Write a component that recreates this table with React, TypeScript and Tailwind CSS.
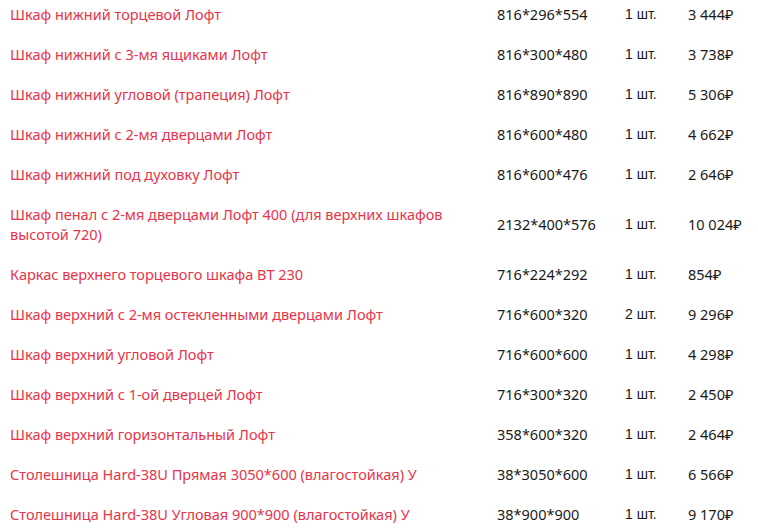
const items = [
  { name: "Шкаф нижний торцевой Лофт", size: "816*296*554", qty: "1 шт.", price: "3 444₽" },
  { name: "Шкаф нижний с 3-мя ящиками Лофт", size: "816*300*480", qty: "1 шт.", price: "3 738₽" },
  { name: "Шкаф нижний угловой (трапеция) Лофт", size: "816*890*890", qty: "1 шт.", price: "5 306₽" },
  { name: "Шкаф нижний с 2-мя дверцами Лофт", size: "816*600*480", qty: "1 шт.", price: "4 662₽" },
  { name: "Шкаф нижний под духовку Лофт", size: "816*600*476", qty: "1 шт.", price: "2 646₽" },
  { name: "Шкаф пенал с 2-мя дверцами Лофт 400 (для верхних шкафов высотой 720)", size: "2132*400*576", qty: "1 шт.", price: "10 024₽" },
  { name: "Каркас верхнего торцевого шкафа ВТ 230", size: "716*224*292", qty: "1 шт.", price: "854₽" },
  { name: "Шкаф верхний с 2-мя остекленными дверцами Лофт", size: "716*600*320", qty: "2 шт.", price: "9 296₽" },
  { name: "Шкаф верхний угловой Лофт", size: "716*600*600", qty: "1 шт.", price: "4 298₽" },
  { name: "Шкаф верхний с 1-ой дверцей Лофт", size: "716*300*320", qty: "1 шт.", price: "2 450₽" },
  { name: "Шкаф верхний горизонтальный Лофт", size: "358*600*320", qty: "1 шт.", price: "2 464₽" },
  { name: "Столешница Hard-38U Прямая 3050*600 (влагостойкая) У", size: "38*3050*600", qty: "1 шт.", price: "6 566₽" },
  { name: "Столешница Hard-38U Угловая 900*900 (влагостойкая) У", size: "38*900*900", qty: "1 шт.", price: "9 170₽" },
];

export default function App() {
  return (
    <div className="w-[758px] h-[529px] overflow-hidden bg-white font-['Noto_Sans',sans-serif] text-[14.5px] leading-[20px]">
      <div className="-mt-[6px] flex flex-col">
        {items.map((it) => (
          <div key={it.name} className="flex items-center py-[10px]">
            <div className="w-[497px] pl-[10px] pr-[40px] text-[#e8334a]">{it.name}</div>
            <div className="w-[128px] text-[#1a1a1a]">{it.size}</div>
            <div className="w-[63px] text-[14px] text-[#1a1a1a] font-['Liberation_Sans',sans-serif]">{it.qty}</div>
            <div className="flex-1 text-[#1a1a1a]">{it.price}</div>
          </div>
        ))}
      </div>
    </div>
  );
}
